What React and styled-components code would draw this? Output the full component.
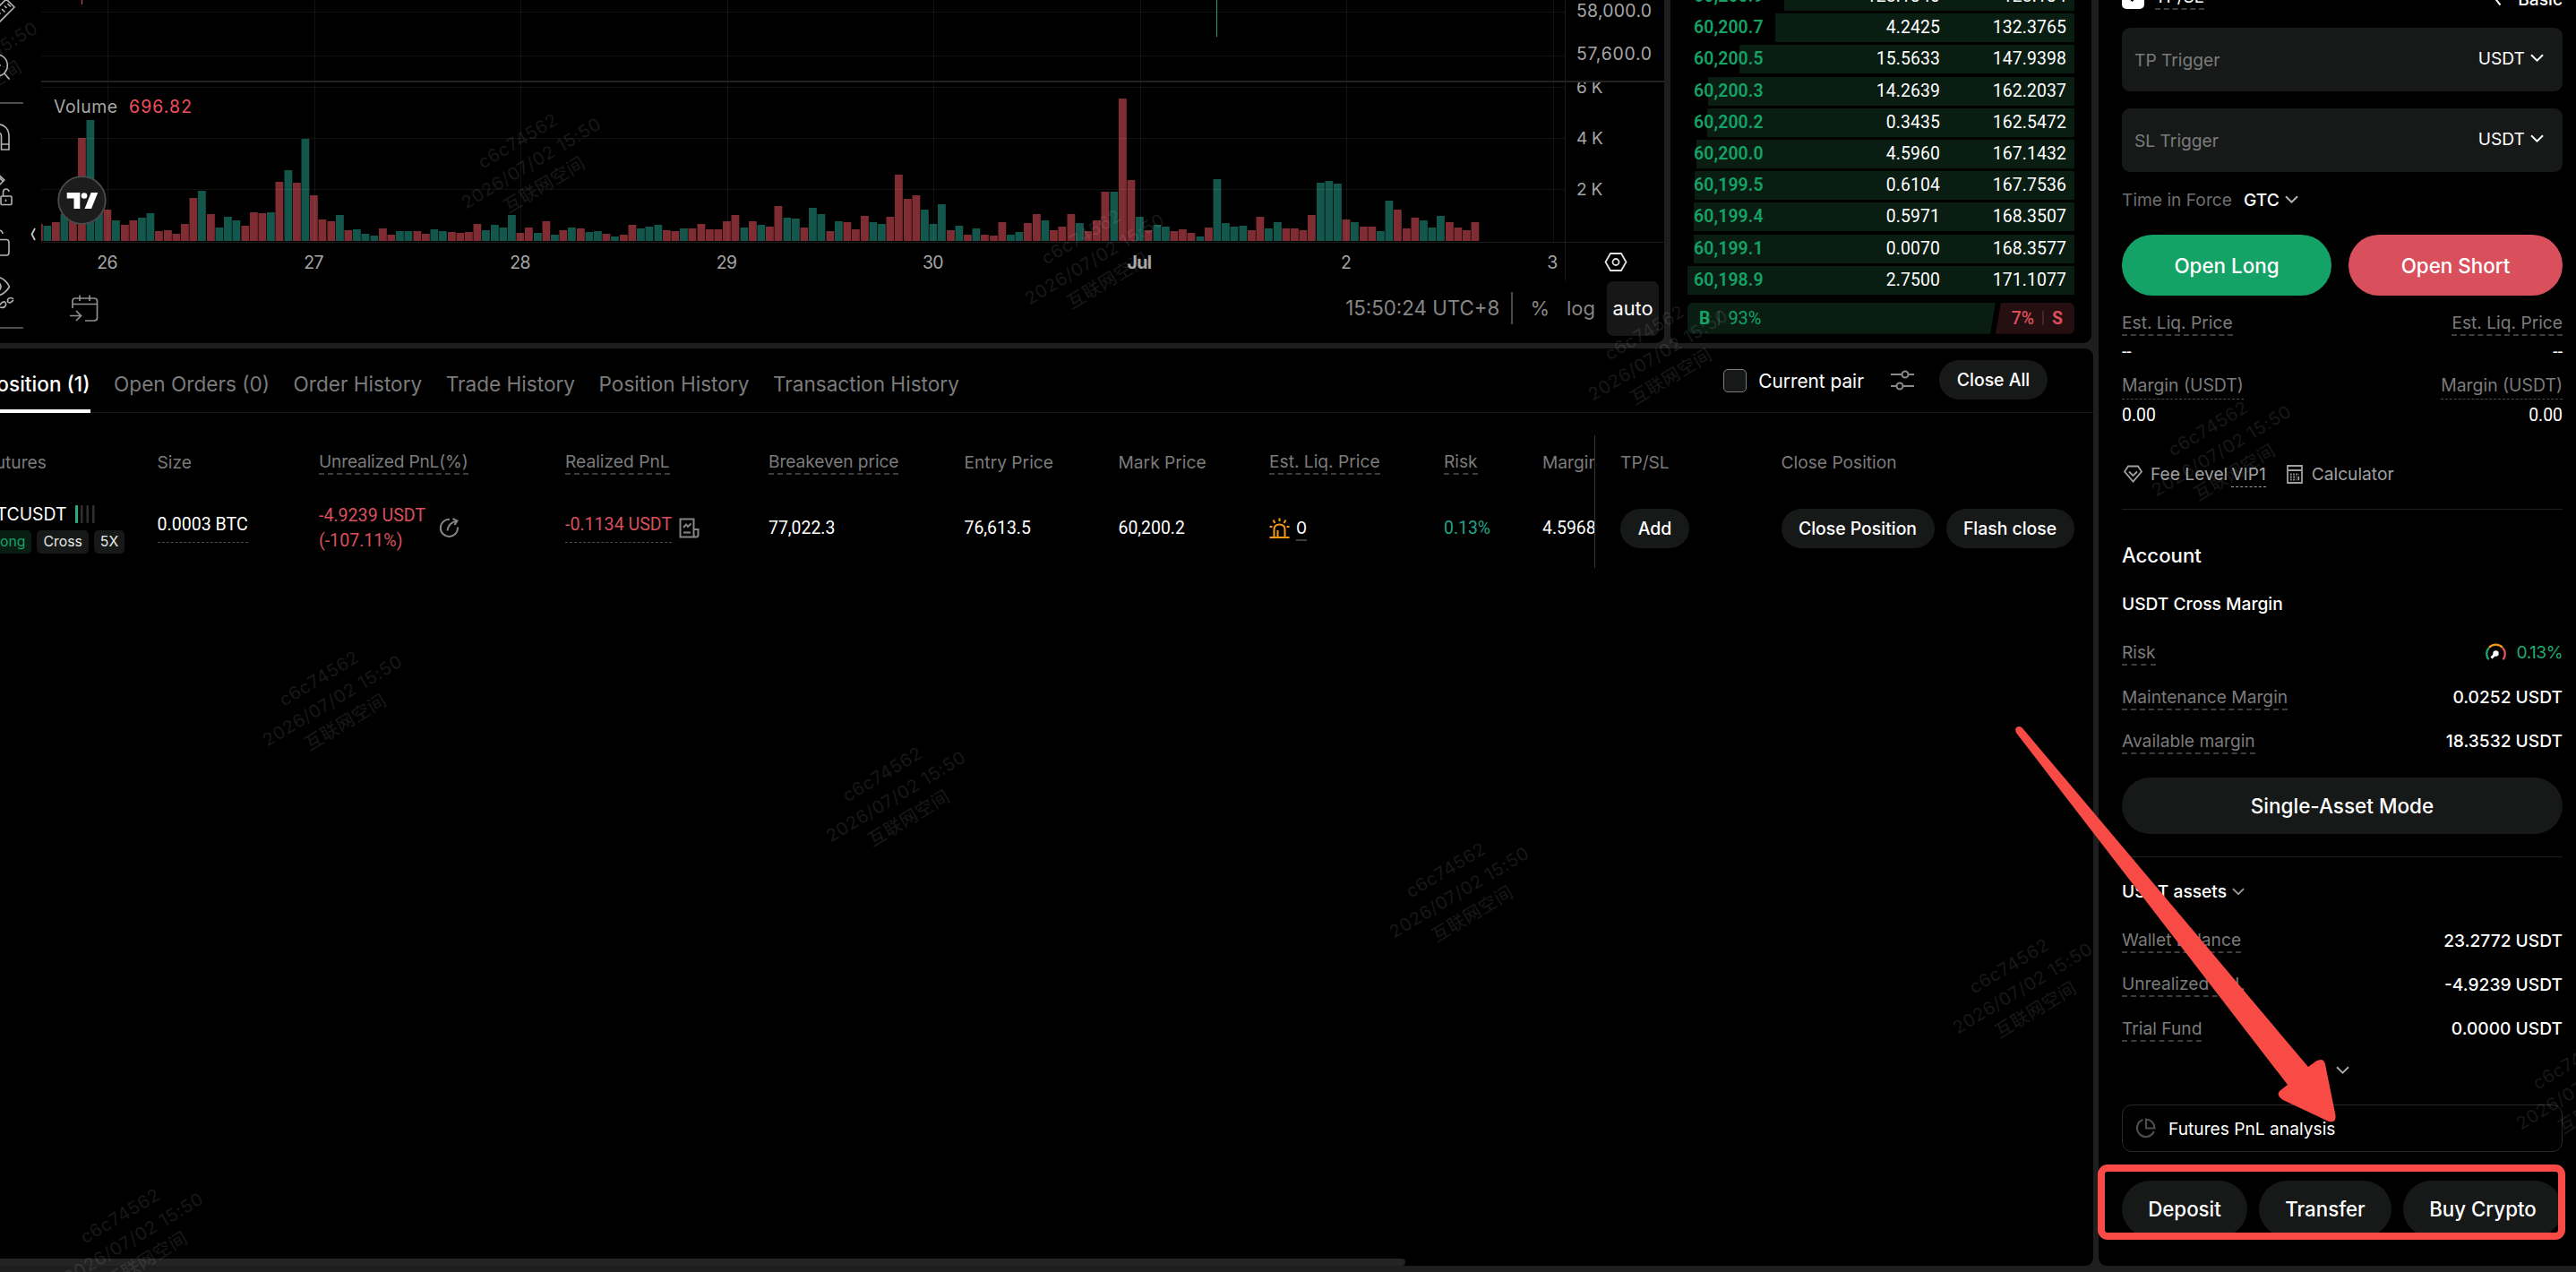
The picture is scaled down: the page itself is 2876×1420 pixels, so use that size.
import React from 'react';
import styled, { createGlobalStyle } from 'styled-components';

const GREEN = '#14a266';
const RED = '#d9505c';
const MUTED = '#7b7b7b';
const SURFACE = '#161918';

const GlobalStyle = createGlobalStyle`
  body {
    margin: 0;
    background: #1e1e1e;
    color: #fff;
    font-family: Inter, 'Noto Sans CJK SC', sans-serif;
    font-size: 19.2px;
    overflow: hidden;
  }
  * {
    box-sizing: border-box;
  }
  svg {
    display: block;
    flex: none;
  }
`;

const Page = styled.div`
  position: relative;
  display: flex;
  width: 2876px;
  height: 1420px;
  overflow: hidden;
  background: #1e1e1e;
`;

const LeftSide = styled.div`
  display: flex;
  flex-direction: column;
  gap: 6px;
  width: 2343px;
  height: 1420px;
`;

const TopPanels = styled.div`
  display: flex;
  gap: 7px;
  height: 383px;
`;

const Text = styled.span`
  white-space: nowrap;
  font-size: ${({ $size }) => $size || 19.2}px;
  font-weight: ${({ $weight }) => $weight || 400};
  color: ${({ $color }) => $color || '#fff'};
  letter-spacing: ${({ $track }) => $track || 0}px;
`;

const Dashed = styled(Text)`
  line-height: 25px;
  padding-top: 2px;
  border-bottom: 2px dashed #3d3d3d;
`;

const ThinDashed = styled(Text)`
  line-height: ${({ $line }) => $line || 30}px;
  padding-top: 1px;
  border-bottom: 1px dashed ${({ $rule }) => $rule || '#4a4a4a'};
`;

const Num = styled(Text)`
  font-family: Roboto, Inter, sans-serif;
  font-size: ${({ $size }) => $size || 19.4}px;
`;

const NumDashed = styled(ThinDashed)`
  font-family: Roboto, Inter, sans-serif;
  font-size: 19.6px;
`;

const Pill = styled.button`
  display: flex;
  align-items: center;
  justify-content: center;
  height: ${({ $height }) => $height || 44}px;
  width: ${({ $width }) => ($width ? `${$width}px` : '100%')};
  flex: none;
  padding: 0;
  border: 0;
  border-radius: 34px;
  background: ${({ $bg }) => $bg || SURFACE};
  color: #fff;
  font-family: inherit;
  font-size: ${({ $size }) => $size || 19.4}px;
  font-weight: 500;
  white-space: nowrap;
`;

const Chevron = ({ size = 15, color = '#fff', stroke = 2 }) => (
  <svg width={size} height={size * 0.62} viewBox="0 0 15 9.3" fill="none" stroke={color} strokeWidth={stroke}>
    <path d="M1 1.2 L7.5 7.7 L14 1.2" />
  </svg>
);

/* ---------- chart ---------- */

const ChartPanel = styled.section`
  display: flex;
  width: 1858px;
  height: 383px;
  background: #000;
  border-radius: 0 0 9px 0;
  overflow: hidden;
`;

const Toolbar = styled.div`
  display: flex;
  flex-direction: column;
  width: 34px;
  flex: none;
`;

const ToolLine = styled.div`
  width: 26px;
  height: 2px;
  flex: none;
  background: #4d4d4d;
  margin-top: ${({ $top }) => $top}px;
`;

const ToolIcon = styled.svg`
  margin-top: ${({ $top }) => $top}px;
  fill: none;
  stroke: #b4b4b4;
  stroke-width: 1.6;
`;

const CollapseTab = styled.svg`
  margin: 254px 6px 0 0;
`;

const ChartBody = styled.div`
  display: flex;
  flex-direction: column;
  flex: 1;
`;

const ChartFooter = styled.div`
  display: flex;
  align-items: center;
  height: 70px;
  padding: 0 6px 8px 32px;
`;

const Clock = styled.div`
  margin-left: auto;
  padding-right: 13px;
  height: 36px;
  line-height: 36px;
  border-right: 2px solid #4a4a4a;
`;

const Scale = styled(Text)`
  margin-left: ${({ $left }) => $left}px;
`;

const ScaleButton = styled.div`
  display: flex;
  align-items: center;
  justify-content: center;
  width: 58px;
  height: 61px;
  margin-left: 13px;
  border-radius: 7px;
  background: #171717;
`;

const ChartTools = () => (
  <Toolbar>
    <ToolIcon $top={0} width="26" height="28" viewBox="0 0 26 28">
      <path d="M7 -1 L16 8 L-1 25 M7 -1 L-3 9 M8.5 4 l3.5 3.5 M5 6.5 l2.5 2.5 M2 10 l3.5 3.5 M-2 13 l2.5 2.5" />
    </ToolIcon>
    <ToolIcon $top={30} width="26" height="34" viewBox="0 58 26 34">
      <circle cx="-4" cy="73" r="12.3" />
      <path d="M-8 73 h9 M4.8 82 l5.6 6.5" />
    </ToolIcon>
    <ToolLine $top={22} />
    <ToolIcon $top={19} width="26" height="36" viewBox="0 135 26 36">
      <path d="M-4 138.5 C5 138.5 10 144 10 152 V167 H1.5 V152 C1.5 149 0 147.500 -4 147 M1.500 161 H10" />
    </ToolIcon>
    <ToolIcon $top={20} width="26" height="41" viewBox="0 191 26 41">
      <path d="M-2 194.500 L4.800 201 L-2 208 M-1 198 l4 4" />
      <rect x="1" y="219" width="12" height="9.500" rx="1" />
      <path d="M3.500 219 V214.500 C3.500 210 10 210 10 214 M6.500 222.500 v2.500" />
    </ToolIcon>
    <ToolIcon $top={20} width="26" height="37" viewBox="0 252 26 37">
      <path d="M-2 267.500 H7 Q10 267.500 10 270.500 V282 Q10 285 7 285 H-2 M-2 257 Q2.500 257 3 261" />
    </ToolIcon>
    <ToolIcon $top={17} width="26" height="42" viewBox="0 306 26 42">
      <path d="M-3 309 Q6 311 10.500 320 Q6 328 -3 330.500 M-1 315.500 Q3 320 -1 324.500" />
      <path d="M0 343 C7 345 8 338 5 337 C2 336 1 340 -1 341 M9 337 C7 333 12 331 15 334 M8 336 C10 340 13 337 15 335" />
    </ToolIcon>
    <ToolLine $top={17} />
  </Toolbar>
);

// One entry per hourly bar: direction and height in pixels.
const VOLUME = `r19 g17 r21 g30 r26 r115 g135 g34 r35 g23 r18 r23 g26 g31 r11 r12 r8 r19 r48 g56 r30 g15
g27 g23 r17 r32 r31 g32 r66 g79 r65 g114 r51 r24 r22 g29 r12 g13 g8 g6 r14 r7 g11 g11 r11 r8 g13 g11 r10
r9 r10 r19 g12 g18 g15 g29 r9 r15 g9 r22 g7 r12 g15 r14 g10 g11 r8 g5 r7 r18 g14 g16 g18 r12 r11 g14 r14
r19 r13 r13 r22 r29 g15 r22 g18 r16 r39 g26 g25 r15 g37 g30 r11 g22 r21 r13 r28 g21 g19 r27 r74 r47 r51
g35 g19 g41 r12 g17 r7 g14 r7 r6 r21 g7 g10 r20 r30 g23 r12 r16 r30 g20 r11 r23 r55 g55 r159 r68 g27 r12
g18 g16 r11 r13 r9 g5 r15 g69 g20 g16 g17 r12 r27 g14 g21 r14 r14 r12 r29 g65 g67 g64 r24 g21 r16 r16 g11
g45 r35 r14 r26 g23 g15 g28 r21 r15 r12 r21`.split(/\s+/);

const DAYS = ['26', '27', '28', '29', '30', 'Jul', '2', '3'];
const DAY_WIDTH = 230.5;

const VolumeChart = () => (
  <svg width="1812" height="313" viewBox="46 0 1812 313" fontFamily="Inter, sans-serif" fontSize="19.4" fill="#a6a6a6">
    <defs>
      <clipPath id="plot">
        <rect x="46" y="0" width="1702" height="270" />
      </clipPath>
      <clipPath id="lowerAxis">
        <rect x="1748" y="92" width="110" height="180" />
      </clipPath>
    </defs>
    <g clipPath="url(#plot)">
      {VOLUME.map((bar, i) => {
        const height = Number(bar.slice(1));
        return (
          <rect
            key={i}
            x={Math.round((120 + (i - 8) * (DAY_WIDTH / 24) - 4.4) * 2) / 2}
            y={269 - height}
            width="8.8"
            height={height}
            fill={bar[0] === 'r' ? '#7f2c33' : '#13574c'}
          />
        );
      })}
    </g>
    <g fill="#fff" fillOpacity="0.065">
      {[13, 62, 97, 154, 211].map(y => (
        <rect key={y} x="46" y={y} width="1702" height="1" />
      ))}
      {DAYS.map((day, i) => (
        <rect key={day} x={Math.round(120 + i * DAY_WIDTH)} y="0" width="1" height="270" />
      ))}
    </g>
    <rect x="46" y="270" width="1812" height="1" fill="#1b1b1b" />
    <rect x="1747" y="0" width="1" height="313" fill="#1b1b1b" />
    <rect x="46" y="90" width="1812" height="2" fill="#222" />
    <rect x="91" y="0" width="1" height="5" fill={RED} />
    <rect x="1358" y="0" width="1" height="41" fill={GREEN} />

    <text x="60" y="126" textLength="71">Volume</text>
    <text x="144" y="126" fill="#ef4f5f" textLength="70">696.82</text>
    <text x="1760" y="19" textLength="84">58,000.0</text>
    <text x="1760" y="67" textLength="84">57,600.0</text>
    <g clipPath="url(#lowerAxis)" wordSpacing="-0.5" fontSize="19">
      <text x="1760" y="104">6 K</text>
      <text x="1760" y="161">4 K</text>
      <text x="1760" y="218">2 K</text>
    </g>
    {DAYS.map((day, i) => (
      <text key={day} x={119.5 + i * DAY_WIDTH} y="300" textAnchor="middle" fontWeight={day === 'Jul' ? 700 : 400} letterSpacing="-0.6">
        {day}
      </text>
    ))}

    <circle cx="91.500" cy="223.500" r="26.300" fill="#1c1c1c" stroke="#4b4b4b" strokeWidth="1.800" />
    <g fill="#fff">
      <path d="M74.700 215 H89.300 V233 H82.500 V221.500 H74.700 Z M101.700 215 H109.300 L102 233 H94.500 Z" />
      <circle cx="94" cy="218.500" r="3.300" />
    </g>
    <g fill="none" stroke="#e0e0e0" strokeWidth="1.800">
      <path d="M1798 283 H1810 L1815.500 292.500 L1810 302 H1798 L1792.500 292.500 Z" />
      <circle cx="1804" cy="292.500" r="3.500" />
    </g>
  </svg>
);

const CalendarIcon = () => (
  <svg width="32" height="30" viewBox="78 329 32 30" fill="none" stroke="#8f8f8f" strokeWidth="1.700">
    <path d="M81 344 V336 Q81 333 84 333 H105 Q108.500 333 108.500 336 V355 Q108.500 358 105 358 H95 M81 339.500 H108 M89 329.500 V336 M100 329.500 V336 M78 352.500 H90 M85 347 L90.500 352.500 L85 358" />
  </svg>
);

const Chart = () => (
  <ChartPanel>
    <ChartTools />
    <CollapseTab width="6" height="15" viewBox="34 254 6 15" fill="none" stroke="#c4c4c4" strokeWidth="1.800">
      <path d="M39 255 L35.500 261.500 L39 268" />
    </CollapseTab>
    <ChartBody>
      <VolumeChart />
      <ChartFooter>
        <CalendarIcon />
        <Clock>
          <Text $size={22.3} $color="#868686">15:50:24 UTC+8</Text>
        </Clock>
        <Scale $left={19} $size={22} $color="#868686">%</Scale>
        <Scale $left={19} $size={22} $color="#868686">log</Scale>
        <ScaleButton>
          <Text $size={21.8}>auto</Text>
        </ScaleButton>
      </ChartFooter>
    </ChartBody>
  </ChartPanel>
);

/* ---------- order book ---------- */

const BookPanel = styled.section`
  width: 470px;
  height: 383px;
  padding: 0 19px;
  background: #000;
  border-radius: 0 0 9px 9px;
  overflow: hidden;
`;

const BookRows = styled.div`
  display: flex;
  flex-direction: column;
  gap: 3.2px;
  margin-top: -20px;
`;

const BookRow = styled.div`
  display: grid;
  grid-template-columns: 140px 135px 141px;
  align-items: center;
  height: 32px;
  padding: 0 0 1px 7px;
  background: linear-gradient(#0a1d13, #0a1d13) right / ${({ $fill }) => $fill}px 100% no-repeat;

  ${Num}:not(:first-child) {
    text-align: right;
  }
`;

const Ratio = styled.div`
  display: flex;
  justify-content: space-between;
  height: 35px;
  margin-top: 9px;
  border-radius: 6px;
  overflow: hidden;
`;

const RatioSide = styled.div`
  display: flex;
  align-items: center;
  gap: 9px;
  width: ${({ $width }) => $width}px;
  padding: 0 13px;
  justify-content: ${({ $sell }) => ($sell ? 'flex-end' : 'flex-start')};
  background: ${({ $sell }) => ($sell ? '#260f10' : '#0a1d13')};
  clip-path: ${({ $sell }) =>
    $sell ? 'polygon(6px 0, 100% 0, 100% 100%, 0 100%)' : 'polygon(0 0, 100% 0, calc(100% - 6px) 100%, 0 100%)'};
`;

const RatioDivider = styled.i`
  width: 2px;
  height: 16px;
  background: ${({ $sell }) => ($sell ? '#4c2326' : '#1d3d2e')};
`;

const BIDS = [
  ['60,200.9', '128.1340', '128.134', 324],
  ['60,200.7', '4.2425', '132.3765', 334],
  ['60,200.5', '15.5633', '147.9398', 374],
  ['60,200.3', '14.2639', '162.2037', 409],
  ['60,200.2', '0.3435', '162.5472', 410],
  ['60,200.0', '4.5960', '167.1432', 422],
  ['60,199.5', '0.6104', '167.7536', 424],
  ['60,199.4', '0.5971', '168.3507', 425],
  ['60,199.1', '0.0070', '168.3577', 425],
  ['60,198.9', '2.7500', '171.1077', 432],
];

const OrderBook = () => (
  <BookPanel>
    <BookRows>
      {BIDS.map(([price, amount, total, fill]) => (
        <BookRow key={price} $fill={fill}>
          <Num $weight={600} $color={GREEN} $track={0.15}>{price}</Num>
          <Num $track={0.1}>{amount}</Num>
          <Num $track={0.1}>{total}</Num>
        </BookRow>
      ))}
    </BookRows>
    <Ratio>
      <RatioSide $width={344}>
        <Num $weight={700} $color={GREEN}>B</Num>
        <RatioDivider />
        <Num $size={20} $color={GREEN}>93%</Num>
      </RatioSide>
      <RatioSide $sell $width={88}>
        <Num $weight={500} $color={RED}>7%</Num>
        <RatioDivider $sell />
        <Num $weight={700} $color={RED}>S</Num>
      </RatioSide>
    </Ratio>
  </BookPanel>
);

/* ---------- positions ---------- */

const PositionsPanel = styled.section`
  display: flex;
  flex-direction: column;
  width: 2337px;
  height: 1024px;
  background: #000;
  border-radius: 0 9px 9px 0;
  overflow: hidden;
`;

const PanelHeader = styled.div`
  display: flex;
  align-items: flex-start;
  height: 72px;
  border-bottom: 1px solid #161616;
`;

const Tabs = styled.div`
  display: flex;
  gap: 26.5px;
  margin-left: -18px;
`;

const Tab = styled.div`
  height: 72px;
  padding-top: 26px;
  font-size: 22.6px;
  line-height: 27px;
  white-space: nowrap;
  font-weight: ${({ $active }) => ($active ? 500 : 400)};
  color: ${({ $active }) => ($active ? '#fff' : MUTED)};
  border-bottom: ${({ $active }) => ($active ? '4px solid #fff' : '0')};
`;

const HeaderActions = styled.div`
  display: flex;
  align-items: center;
  margin: 13px 51px 0 auto;
  height: 44px;
`;

const Checkbox = styled.span`
  width: 26px;
  height: 26px;
  margin: 2px 13px 0 0;
  border: 1.5px solid #7d7d7d;
  border-radius: 5px;
  background: ${SURFACE};
`;

const PairLabel = styled(Text)`
  margin-top: 2px;
`;

const SlidersIcon = styled.svg`
  margin: 0 28px 0 30px;
`;

const Tables = styled.div`
  display: flex;
  height: 148px;
  margin-top: 25px;
`;

const ScrollTable = styled.div`
  width: 1781px;
  overflow: hidden;
  border-right: 1px solid #333;
`;

const GridRow = styled.div`
  display: grid;
  grid-template-columns: ${({ $fixed }) =>
    $fixed ? '179.5px 348px' : '191.5px 180.5px 275px 227px 218.5px 172px 168.5px 195px 110px 100px'};
  margin-left: ${({ $fixed }) => ($fixed ? 28 : -16)}px;
  height: ${({ $head }) => ($head ? 59 : 89)}px;
`;

const Cell = styled.div`
  display: flex;
  align-items: center;
  gap: ${({ $gap }) => $gap || 0}px;
  padding-bottom: ${({ $lift }) => $lift || 0}px;
`;

const Stack = styled.div`
  display: flex;
  flex-direction: column;
  gap: ${({ $gap }) => $gap || 0}px;
  line-height: ${({ $line }) => $line}px;
`;

const Inline = styled.div`
  display: flex;
  align-items: center;
  gap: ${({ $gap }) => $gap}px;
`;

const Badge = styled.span`
  height: 26px;
  padding: 0 7px;
  border-radius: 5px;
  background: ${({ $long }) => ($long ? '#0a1d13' : SURFACE)};
  color: ${({ $long }) => ($long ? GREEN : '#e8e8e8')};
  font-size: 15.8px;
  line-height: 26px;
`;

const ScrollThumb = styled.div`
  width: 1569px;
  height: 8px;
  margin-top: auto;
  border-radius: 0 4px 4px 0;
  background: #242424;
`;

const LeverageBars = () => (
  <svg width="22" height="20" viewBox="0 0 22 20">
    <rect width="3" height="20" rx="1" fill="#22b07d" />
    {[6, 12.5, 19].map(x => (
      <rect key={x} x={x} width="2.500" height="20" rx="1" fill="#303030" />
    ))}
  </svg>
);

const ShareIcon = () => (
  <svg width="23" height="23" viewBox="0 0 23 23" fill="none" stroke="#858585" strokeWidth="2">
    <path d="M12 1.800 A9.600 9.600 0 1 0 21 10.500 M9.500 14.500 C9.500 9.500 14 4.500 20 3.800 M15.500 1 L20.500 3.500 L17.500 8" />
  </svg>
);

const ReportIcon = () => (
  <svg width="23" height="23" viewBox="0 0 23 23" fill="none" stroke="#858585" strokeWidth="2">
    <path d="M16.500 13 V1.500 H1.500 V21.500 H19 Q21.500 21.500 21.500 19 V13 H16.500 V19 Q16.500 21.500 19 21.500 M5 11 L8 7.500 L10 10 L13.500 6.500 M5 16.500 H13" />
  </svg>
);

const AlarmIcon = () => (
  <svg width="23" height="24" viewBox="0 0 23 24" fill="none" stroke="#f39a13" strokeWidth="2">
    <path d="M0.500 22 H22.500 M5.500 22 V13 Q5.500 7.500 11.500 7.500 Q17.500 7.500 17.500 13 V22 M9.500 21 V14 M11.500 0.500 V4 M4.500 2.500 L6.500 6 M18.500 2.500 L16.500 6 M0.500 10 H3.500 M19.500 10 H22.500" />
  </svg>
);

const COLUMNS = [
  ['Futures', false],
  ['Size', false],
  ['Unrealized PnL(%)', true, -0.2],
  ['Realized PnL', true],
  ['Breakeven price', true, -0.1],
  ['Entry Price', false],
  ['Mark Price', false],
  ['Est. Liq. Price', true],
  ['Risk', true],
  ['Margin', false],
];

const Positions = () => (
  <PositionsPanel>
    <PanelHeader>
      <Tabs>
        <Tab $active>Position (1)</Tab>
        <Tab>Open Orders (0)</Tab>
        <Tab>Order History</Tab>
        <Tab>Trade History</Tab>
        <Tab>Position History</Tab>
        <Tab>Transaction History</Tab>
      </Tabs>
      <HeaderActions>
        <Checkbox />
        <PairLabel $size={20.8}>Current pair</PairLabel>
        <SlidersIcon width="26" height="23" viewBox="0 0 26 23" fill="none" stroke="#8a8a8a" strokeWidth="2">
          <path d="M0 5 H12 M20 5 H26 M0 18 H6 M14 18 H26" />
          <circle cx="16" cy="5" r="3.500" />
          <circle cx="10" cy="18" r="3.500" />
        </SlidersIcon>
        <Pill $width={121}>Close All</Pill>
      </HeaderActions>
    </PanelHeader>

    <Tables>
      <ScrollTable>
        <GridRow $head>
          {COLUMNS.map(([label, dashed, track]) => (
            <Cell key={label}>
              {dashed ? (
                <Dashed $color={MUTED} $track={track}>{label}</Dashed>
              ) : (
                <Text $color={MUTED}>{label}</Text>
              )}
            </Cell>
          ))}
        </GridRow>
        <GridRow>
          <Cell>
            <Stack $gap={5} $line={26}>
              <Inline $gap={9}>
                <Text $size={19.4}>BTCUSDT</Text>
                <LeverageBars />
              </Inline>
              <Inline $gap={6}>
                <Badge $long>Long</Badge>
                <Badge>Cross</Badge>
                <Badge>5X</Badge>
              </Inline>
            </Stack>
          </Cell>
          <Cell $lift={8}><NumDashed $line={38}>0.0003 BTC</NumDashed></Cell>
          <Cell $gap={15}>
            <Stack $line={28}>
              <Num $size={19.6} $color={RED}>-4.9239 USDT</Num>
              <Num $size={19.6} $color={RED}>(-107.11%)</Num>
            </Stack>
            <ShareIcon />
          </Cell>
          <Cell $gap={8}>
            <Cell $lift={8}><NumDashed $line={38} $color={RED}>-0.1134 USDT</NumDashed></Cell>
            <ReportIcon />
          </Cell>
          <Cell><Num>77,022.3</Num></Cell>
          <Cell><Num>76,613.5</Num></Cell>
          <Cell><Num>60,200.2</Num></Cell>
          <Cell $gap={7}>
            <AlarmIcon />
            <Dashed>0</Dashed>
          </Cell>
          <Cell><Num $color="#23a287">0.13%</Num></Cell>
          <Cell><Num>4.5968</Num></Cell>
        </GridRow>
      </ScrollTable>
      <div>
        <GridRow $head $fixed>
          <Cell><Text $color={MUTED}>TP/SL</Text></Cell>
          <Cell><Text $color={MUTED}>Close Position</Text></Cell>
        </GridRow>
        <GridRow $fixed>
          <Cell><Pill $width={77}>Add</Pill></Cell>
          <Cell $gap={13}>
            <Pill $width={171}>Close Position</Pill>
            <Pill $width={143}>Flash close</Pill>
          </Cell>
        </GridRow>
      </div>
    </Tables>
    <ScrollThumb />
  </PositionsPanel>
);

/* ---------- trade sidebar ---------- */

const SidePanel = styled.aside`
  display: flex;
  flex-direction: column;
  width: 533px;
  height: 1413px;
  padding: 0 15px 0 26px;
  background: #000;
  border-radius: 0 0 0 9px;
  overflow: hidden;
`;

const Row = styled.div`
  display: flex;
  align-items: center;
  justify-content: space-between;
  flex: none;
  height: ${({ $height }) => $height || 40}px;
  margin-top: ${({ $top }) => $top || 0}px;
`;

const StrategyRow = styled.div`
  display: flex;
  align-items: flex-end;
  flex: none;
  height: 11px;
  margin-bottom: 20px;
`;

const Checked = styled.span`
  display: flex;
  align-items: flex-end;
  justify-content: center;
  width: 25px;
  height: 25px;
  margin: 0 12px 1px 0;
  border-radius: 5px;
  background: #fff;
`;

const Basic = styled.div`
  display: flex;
  align-items: flex-end;
  gap: 18px;
  margin-left: auto;
  line-height: 24px;
`;

const Field = styled.div`
  display: flex;
  align-items: center;
  justify-content: space-between;
  flex: none;
  height: 71px;
  margin-bottom: ${({ $last }) => ($last ? 0 : 19)}px;
  padding: 0 21px 0 14px;
  border-radius: 9px;
  background: ${SURFACE};
`;

const Unit = styled.div`
  display: flex;
  align-items: center;
  gap: 6px;
  margin-bottom: 3px;
`;

const Divider = styled.hr`
  width: 100%;
  height: 1px;
  flex: none;
  margin: ${({ $top }) => $top || 0}px 0 0;
  border: 0;
  background: #1f1f1f;
`;

const Analysis = styled.div`
  display: flex;
  align-items: center;
  gap: 14px;
  flex: none;
  height: 53px;
  margin-top: 18px;
  padding-left: 14px;
  border: 1px solid #2a2a2a;
  border-radius: 11px;
`;

const Group = styled.div`
  display: flex;
  align-items: center;
  gap: ${({ $gap }) => $gap}px;
`;

const FeeRow = styled(Group)`
  flex: none;
  height: 78px;
  margin-top: 14px;
  padding-left: 2px;
`;

const CalculatorLink = styled(Group)`
  margin-left: 14px;
`;

const Centered = styled(Row)`
  justify-content: center;
`;

const GemIcon = () => (
  <svg width="21" height="20" viewBox="0 0 21 20" fill="none" stroke="#a0a0a0" strokeWidth="1.800">
    <path d="M5 1.500 H16 L20 7.500 L10.500 18.500 L1 7.500 Z M6 7.500 L10.500 12 L15 7.500" />
  </svg>
);

const CalculatorIcon = () => (
  <svg width="18" height="21" viewBox="0 0 18 21" fill="none" stroke="#a0a0a0" strokeWidth="1.800">
    <path d="M1 1 H17 V20 H1 Z M1 6 H17" />
    <path d="M4 10.500 H14 M4 13.500 H11 M4 16.500 H11" strokeDasharray="1.700 1.500" />
    <path d="M13.200 12.800 V17.300" />
  </svg>
);

const GaugeIcon = () => (
  <svg width="23" height="20" viewBox="0 0 23 20" fill="none" strokeWidth="2.300">
    <path d="M3.500 18.300 A10 10 0 0 1 3.800 5.200" stroke="#1aa873" />
    <path d="M4 5 A10 10 0 0 1 19 5" stroke="#f39a13" />
    <path d="M19.200 5.200 A10 10 0 0 1 19.500 18.300" stroke="#e5555f" />
    <path d="M11.500 11.500 L6.500 16.500" stroke="#fff" strokeWidth="3" />
    <circle cx="11.500" cy="11.500" r="3.200" fill="#fff" />
  </svg>
);

const PieIcon = () => (
  <svg width="23" height="23" viewBox="0 0 23 23" fill="none" stroke="#4d4d4d" strokeWidth="2.200">
    <path d="M8.500 2 A9.800 9.800 0 1 0 20.800 15 M12 1.500 V11.500 H21.500 A10 10 0 0 0 12 1.500 Z" />
  </svg>
);

const Balance = ({ label, value, top }) => (
  <Row $top={top}>
    <Dashed $color={MUTED}>{label}</Dashed>
    <Text $weight={500}>{value}</Text>
  </Row>
);

const Sidebar = () => (
  <SidePanel>
    <StrategyRow>
      <Checked>
        <svg width="15" height="14" viewBox="0 0 15 14" fill="none" stroke="#000" strokeWidth="3">
          <path d="M1 -1 L6.500 4 L14 -4" />
        </svg>
      </Checked>
      <Dashed>TP/SL</Dashed>
      <Basic>
        <svg width="7" height="17" viewBox="0 0 7 17" fill="none" stroke="#fff" strokeWidth="2">
          <path d="M6 1 L1 6 L5.500 11.500" />
        </svg>
        <Text $weight={500}>Basic</Text>
      </Basic>
    </StrategyRow>
    <Field>
      <Text $color={MUTED}>TP Trigger</Text>
      <Unit><Text>USDT</Text><Chevron /></Unit>
    </Field>
    <Field $last>
      <Text $color={MUTED}>SL Trigger</Text>
      <Unit><Text>USDT</Text><Chevron /></Unit>
    </Field>
    <Row $height={62}>
      <Group $gap={13}>
        <Text $color="#6f6f6f">Time in Force</Text>
        <Group $gap={6}>
          <Text $weight={500}>GTC</Text>
          <Chevron color="#b5b5b5" />
        </Group>
      </Group>
    </Row>
    <Row $height={68} $top={8}>
      <Pill $height={68} $width={234} $size={22.4} $bg={GREEN}>Open Long</Pill>
      <Pill $height={68} $width={239} $size={22.4} $bg={RED}>Open Short</Pill>
    </Row>
    <Row $top={8} $height={44}>
      <Dashed $color={MUTED}>Est. Liq. Price</Dashed>
      <Dashed $color={MUTED}>Est. Liq. Price</Dashed>
    </Row>
    <Row $height={20}>
      <Num>--</Num>
      <Num>--</Num>
    </Row>
    <Row $top={8}>
      <ThinDashed $color={MUTED} $size={19.4}>Margin (USDT)</ThinDashed>
      <ThinDashed $color={MUTED} $size={19.4}>Margin (USDT)</ThinDashed>
    </Row>
    <Row $height={26}>
      <Num>0.00</Num>
      <Num>0.00</Num>
    </Row>
    <FeeRow $gap={9}>
      <GemIcon />
      <Group $gap={4}>
        <Text $color="#a0a0a0">Fee Level</Text>
        <ThinDashed $color="#a0a0a0" $line={27} $rule="#a0a0a0">VIP1</ThinDashed>
      </Group>
      <CalculatorLink $gap={10}>
        <CalculatorIcon />
        <Text $color="#a0a0a0">Calculator</Text>
      </CalculatorLink>
    </FeeRow>
    <Divider />
    <Row $top={30}><Text $size={22.2} $weight={500}>Account</Text></Row>
    <Row $top={15}><Text $weight={500}>USDT Cross Margin</Text></Row>
    <Row $top={14}>
      <Dashed $color={MUTED}>Risk</Dashed>
      <Group $gap={12}>
        <GaugeIcon />
        <Text $color="#22a873" $track={-0.5}>0.13%</Text>
      </Group>
    </Row>
    <Balance top={10} label="Maintenance Margin" value="0.0252 USDT" />
    <Balance top={9} label="Available margin" value="18.3532 USDT" />
    <Row $top={21} $height={63}>
      <Pill $height={63} $size={22.5}>Single-Asset Mode</Pill>
    </Row>
    <Divider $top={25} />
    <Row $top={18}>
      <Group $gap={6}>
        <Text $weight={500}>USDT assets</Text>
        <Chevron size={14} color="#9a9a9a" />
      </Group>
    </Row>
    <Balance top={14.5} label="Wallet Balance" value="23.2772 USDT" />
    <Balance top={9} label="Unrealized PnL" value="-4.9239 USDT" />
    <Balance top={9.5} label="Trial Fund" value="0.0000 USDT" />
    <Centered $top={7}>
      <Chevron color="#a8a8a8" />
    </Centered>
    <Analysis>
      <PieIcon />
      <Text>Futures PnL analysis</Text>
    </Analysis>
    <Row $top={32} $height={63}>
      <Pill $height={63} $width={140} $size={22.3}>Deposit</Pill>
      <Pill $height={63} $width={148} $size={22.3}>Transfer</Pill>
      <Pill $height={63} $width={178} $size={22.3}>Buy Crypto</Pill>
    </Row>
  </SidePanel>
);

/* ---------- overlays ---------- */

const Mark = styled.div`
  position: absolute;
  left: ${({ $x }) => $x}px;
  top: ${({ $y }) => $y}px;
  transform: translate(-50%, -50%) rotate(-31deg);
  color: rgba(255, 255, 255, 0.09);
  font-size: 20px;
  font-weight: 500;
  line-height: 28.5px;
  letter-spacing: 0.4px;
  text-align: center;
  white-space: nowrap;
  pointer-events: none;
`;

const Highlight = styled.div`
  position: absolute;
  left: 2342px;
  top: 1300px;
  width: 522px;
  height: 84px;
  border: 8px solid #f84b46;
  border-radius: 11px;
`;

const Pointer = styled.svg`
  position: absolute;
  left: 2240px;
  top: 800px;
`;

const MARKS = [
  [-36, 75], [593, 182], [1222, 289], [1851, 396], [2480, 503],
  [371, 782], [1000, 889], [1629, 996], [2258, 1103], [2887, 1210],
  [149, 1382],
];

const App = () => (
  <>
    <GlobalStyle />
    <Page>
      <LeftSide>
        <TopPanels>
          <Chart />
          <OrderBook />
        </TopPanels>
        <Positions />
      </LeftSide>
      <Sidebar />
      {MARKS.map(([x, y]) => (
        <Mark key={`${x}-${y}`} $x={x} $y={y}>
          c6c74562<br />2026/07/02 15:50<br />互联网空间
        </Mark>
      ))}
      <Highlight />
      <Pointer width="380" height="464" viewBox="2240 800 380 464" fill="#f84b46">
        <path d="M2251 818 Q2249 813 2252 811.500 Q2256 809.500 2259 814 L2577 1191 L2586 1184.500 Q2594 1180 2596 1188 L2607.500 1245 Q2608.500 1254 2600 1252 L2549 1228 Q2541 1223 2545 1218 L2554 1211 Z" />
      </Pointer>
    </Page>
  </>
);

export default App;
